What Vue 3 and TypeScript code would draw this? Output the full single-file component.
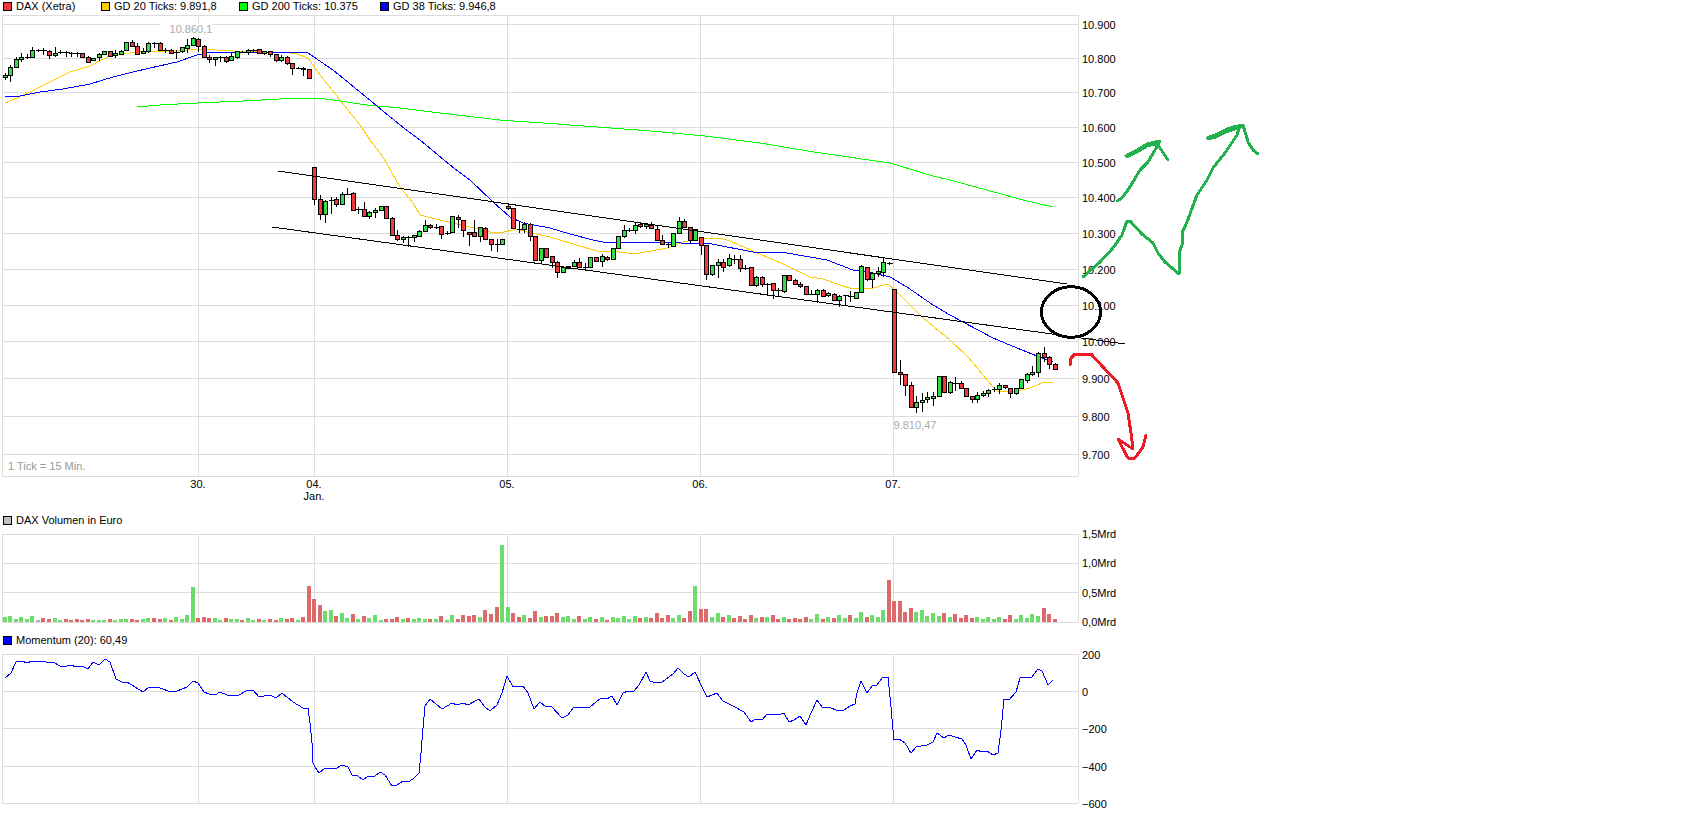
<template>
  <div class="page">
    <div class="legend">
      <div v-for="item in priceLegend" :key="item.label" class="legend-item" :class="item.size">
        <span class="swatch" :style="{ background: item.color }"></span>
        <span>{{ item.label }}</span>
      </div>
    </div>

    <svg class="panel" width="1701" height="502" viewBox="0 12 1701 502">
      <g class="grid">
        <line v-for="y in priceGrid" :key="y" x1="2" x2="1078" :y1="y" :y2="y" />
        <line x1="2" x2="1078" y1="15" y2="15" />
        <line x1="2" x2="1078" y1="476" y2="476" />
        <line v-for="x in dayLines" :key="x" :x1="x" :x2="x" y1="15" y2="476" />
        <line x1="2" x2="2" y1="15" y2="476" />
        <line x1="1078" x2="1078" y1="15" y2="476" />
      </g>

      <rect x="160" y="23" width="52" height="11" fill="#fff" />
      <text class="note middle" x="191" y="33">10.860,1</text>
      <text class="note middle" x="915" y="429">9.810,47</text>
      <text class="tick-note" x="8" y="470">1 Tick = 15 Min.</text>

      <polyline class="line" stroke="#00ff00" :points="gd200" />
      <polyline class="line" stroke="#ffcc00" :points="gd20" />
      <polyline class="line" stroke="#0000ff" :points="gd38" />

      <g v-for="c in candles" :key="c.x">
        <line class="wick" :x1="c.x" :x2="c.x" :y1="c.wickTop" :y2="c.wickBottom" />
        <line v-if="c.kind === 'd'" class="doji" :x1="c.x - 2.5" :x2="c.x + 3" :y1="c.top" :y2="c.top" />
        <rect v-else class="body" :class="c.kind" :x="c.x - 2" :y="c.top" width="4" :height="c.height" />
      </g>

      <line class="channel" x1="278" y1="171" x2="1067" y2="284" />
      <line class="channel" x1="272" y1="227" x2="1125" y2="344" />

      <text v-for="l in priceLabels" :key="l.text" class="label" x="1082" :y="l.y + 4">{{ l.text }}</text>
      <text v-for="d in dayLabels" :key="d.text" class="label middle" :x="d.x" y="488">{{ d.text }}</text>
      <text class="label middle" x="314" y="500">Jan.</text>

      <ellipse class="pen black" cx="1071" cy="312" rx="29.5" ry="25.3" />
      <polyline class="pen green" :points="penLeftLow" />
      <polyline class="pen green" :points="penLeftHigh" />
      <polyline class="pen green" :points="penLeftHead" />
      <polyline class="pen green" :points="penRight" />
      <polyline class="pen green" :points="penRightHead" />
      <polyline class="pen red" :points="penRed" />
    </svg>

    <div class="legend">
      <div class="legend-item">
        <span class="swatch" style="background: #c0c0c0"></span>
        <span>DAX Volumen in Euro</span>
      </div>
    </div>

    <svg class="panel" width="1701" height="108" viewBox="0 526 1701 108">
      <g class="grid">
        <line v-for="y in [534, 563, 592, 622]" :key="y" x1="2" x2="1078" :y1="y" :y2="y" />
        <line v-for="x in dayLines" :key="x" :x1="x" :x2="x" y1="534" y2="622" />
        <line x1="2" x2="2" y1="534" y2="622" />
        <line x1="1078" x2="1078" y1="534" y2="622" />
      </g>
      <rect v-for="b in bars" :key="b.x" :x="b.x" :y="622 - b.h" width="4" :height="b.h" :fill="b.color" />
      <text v-for="l in volumeLabels" :key="l.text" class="label" x="1082" :y="l.y + 4">{{ l.text }}</text>
    </svg>

    <div class="legend">
      <div class="legend-item">
        <span class="swatch" style="background: #0000ff"></span>
        <span>Momentum (20): 60,49</span>
      </div>
    </div>

    <svg class="panel" width="1701" height="169" viewBox="0 646 1701 169">
      <g class="grid">
        <line v-for="y in [654, 691, 728, 766, 803]" :key="y" x1="2" x2="1078" :y1="y" :y2="y" />
        <line v-for="x in dayLines" :key="x" :x1="x" :x2="x" y1="654" y2="803" />
        <line x1="2" x2="2" y1="654" y2="803" />
        <line x1="1078" x2="1078" y1="654" y2="803" />
      </g>
      <polyline class="line" stroke="#0000ff" :points="momentum" />
      <text v-for="l in momentumLabels" :key="l.text" class="label" x="1082" :y="l.y + 4">{{ l.text }}</text>
    </svg>
  </div>
</template>

<script setup lang="ts">
type Kind = 'r' | 'g' | 'd'

const tickX = (i: number) => 4.8 + 5.525 * i

const priceLegend = [
  { label: 'DAX (Xetra)', color: '#ee3a3a', size: 'w98' },
  { label: 'GD 20 Ticks: 9.891,8', color: '#ffcc00', size: 'w138' },
  { label: 'GD 200 Ticks: 10.375', color: '#00ff00', size: 'w141' },
  { label: 'GD 38 Ticks: 9.946,8', color: '#0000ff', size: 'w141' },
]

const priceGrid = [24, 58, 92, 127, 162, 197, 233, 269, 305, 341, 378, 416, 454]
const dayLines = [198, 314, 507, 700, 893]
const priceNames = ['10.900', '10.800', '10.700', '10.600', '10.500', '10.400', '10.300', '10.200', '10.100', '10.000', '9.900', '9.800', '9.700']
const priceLabels = priceNames.map((text, i) => ({ text, y: priceGrid[i] + 1 }))
const dayLabels = [
  { text: '30.', x: 198 },
  { text: '04.', x: 314 },
  { text: '05.', x: 507 },
  { text: '06.', x: 700 },
  { text: '07.', x: 893 },
]
const volumeLabels = [
  { text: '1,5Mrd', y: 534 },
  { text: '1,0Mrd', y: 563 },
  { text: '0,5Mrd', y: 593 },
  { text: '0,0Mrd', y: 622 },
]
const momentumLabels = [
  { text: '200', y: 655 },
  { text: '0', y: 692 },
  { text: '−200', y: 729 },
  { text: '−400', y: 767 },
  { text: '−600', y: 804 },
]

// body top, body bottom, wick top, wick bottom, kind
const rawCandles: [number, number, number, number, Kind][] = [
  [75, 77, 73, 80, 'g'], [67, 75, 65, 82, 'g'], [59, 67, 57, 68, 'g'], [57, 59, 53, 62, 'g'], [57, 57, 54, 59, 'd'],
  [50, 57, 47, 58, 'g'], [50, 50, 49, 52, 'd'], [50, 50, 48, 55, 'd'], [51, 55, 50, 59, 'r'], [53, 55, 47, 57, 'g'],
  [52, 52, 50, 54, 'd'], [52, 52, 51, 57, 'd'], [53, 53, 52, 57, 'd'], [53, 53, 52, 57, 'd'], [53, 57, 53, 57, 'r'],
  [57, 62, 56, 63, 'r'], [58, 60, 58, 61, 'g'], [54, 57, 53, 61, 'g'], [51, 54, 51, 55, 'g'], [51, 56, 51, 56, 'r'],
  [53, 55, 50, 58, 'g'], [51, 54, 50, 55, 'g'], [42, 50, 42, 51, 'g'], [42, 46, 40, 47, 'r'], [46, 54, 43, 54, 'r'],
  [51, 53, 48, 53, 'g'], [43, 51, 42, 53, 'g'], [43, 43, 42, 48, 'd'], [43, 50, 42, 51, 'r'], [50, 50, 48, 53, 'd'],
  [50, 53, 49, 54, 'r'], [52, 52, 50, 59, 'd'], [47, 51, 47, 53, 'g'], [45, 48, 39, 53, 'g'], [38, 45, 37, 46, 'g'],
  [39, 46, 38, 52, 'r'], [46, 57, 45, 58, 'r'], [57, 59, 55, 63, 'r'], [57, 59, 57, 66, 'g'], [57, 57, 56, 62, 'd'],
  [57, 61, 56, 63, 'r'], [56, 60, 52, 61, 'g'], [51, 57, 51, 59, 'g'], [52, 52, 51, 53, 'd'], [50, 52, 49, 55, 'g'],
  [50, 50, 49, 52, 'd'], [49, 53, 49, 54, 'r'], [51, 53, 51, 55, 'g'], [51, 54, 51, 57, 'r'], [54, 60, 54, 62, 'r'],
  [57, 60, 55, 62, 'g'], [57, 63, 56, 65, 'r'], [63, 68, 63, 75, 'r'], [68, 68, 67, 69, 'd'], [68, 69, 67, 76, 'r'],
  [69, 78, 69, 78, 'r'],
  [167, 199, 167, 205, 'r'], [199, 214, 195, 220, 'r'], [201, 214, 200, 223, 'g'], [200, 200, 197, 214, 'd'], [199, 204, 197, 207, 'r'],
  [194, 204, 192, 205, 'g'], [194, 194, 188, 195, 'd'], [193, 210, 192, 210, 'r'], [209, 209, 207, 214, 'd'], [209, 216, 202, 217, 'r'],
  [212, 216, 211, 219, 'g'], [210, 212, 208, 218, 'g'], [206, 210, 206, 211, 'g'], [206, 218, 206, 219, 'r'], [218, 235, 217, 235, 'r'],
  [235, 239, 230, 241, 'r'], [237, 239, 236, 243, 'g'], [237, 237, 236, 247, 'd'], [235, 237, 235, 242, 'g'], [231, 236, 230, 237, 'g'],
  [225, 231, 220, 232, 'g'], [225, 227, 224, 229, 'r'], [227, 227, 224, 229, 'd'], [226, 234, 226, 239, 'r'], [233, 233, 231, 235, 'd'],
  [216, 232, 216, 233, 'g'], [217, 219, 215, 228, 'r'], [220, 230, 220, 237, 'r'], [232, 234, 232, 246, 'r'], [232, 236, 220, 237, 'r'],
  [227, 236, 227, 242, 'g'], [228, 239, 227, 239, 'r'], [239, 244, 239, 251, 'r'], [244, 244, 239, 252, 'd'], [239, 244, 239, 244, 'g'],
  [206, 208, 203, 210, 'r'], [208, 228, 208, 229, 'r'], [229, 229, 221, 233, 'd'], [224, 229, 222, 233, 'g'], [224, 236, 223, 241, 'r'],
  [236, 260, 236, 260, 'r'], [248, 260, 248, 264, 'g'], [248, 257, 248, 258, 'r'], [256, 262, 256, 268, 'r'], [262, 272, 261, 278, 'r'],
  [267, 272, 267, 272, 'g'], [266, 268, 266, 269, 'g'], [262, 266, 260, 267, 'g'], [262, 267, 258, 267, 'r'], [267, 267, 263, 269, 'd'],
  [257, 267, 257, 267, 'g'], [257, 261, 257, 262, 'r'], [256, 261, 254, 267, 'g'], [257, 259, 256, 261, 'r'], [248, 259, 248, 260, 'g'],
  [236, 248, 236, 249, 'g'], [230, 236, 225, 238, 'g'], [230, 230, 228, 232, 'd'], [225, 230, 223, 234, 'g'], [224, 226, 223, 228, 'r'],
  [224, 226, 223, 229, 'g'], [225, 228, 222, 229, 'r'], [229, 240, 225, 240, 'r'], [240, 244, 235, 245, 'r'], [244, 244, 243, 248, 'd'],
  [233, 246, 233, 247, 'g'], [221, 233, 217, 234, 'g'], [221, 227, 219, 228, 'r'], [227, 240, 227, 243, 'r'], [229, 240, 229, 241, 'g'],
  [237, 245, 237, 255, 'r'], [245, 274, 245, 280, 'r'], [265, 274, 265, 276, 'g'], [262, 265, 259, 278, 'g'], [262, 267, 259, 272, 'r'],
  [258, 265, 254, 267, 'g'], [259, 259, 255, 264, 'd'], [259, 268, 255, 272, 'r'], [268, 268, 265, 270, 'd'], [267, 285, 267, 286, 'r'],
  [277, 285, 276, 287, 'g'], [277, 284, 276, 287, 'r'], [284, 284, 283, 296, 'd'], [283, 290, 283, 299, 'r'], [290, 290, 288, 297, 'd'],
  [275, 291, 275, 293, 'g'], [275, 280, 275, 281, 'r'], [280, 284, 279, 285, 'r'], [284, 286, 282, 288, 'r'], [286, 294, 286, 295, 'r'],
  [294, 294, 290, 295, 'd'], [290, 294, 289, 303, 'g'], [290, 296, 289, 297, 'r'], [293, 295, 292, 297, 'g'], [294, 300, 293, 301, 'r'],
  [296, 300, 295, 307, 'g'], [295, 295, 295, 306, 'd'], [296, 296, 291, 302, 'd'], [292, 298, 292, 299, 'g'], [266, 292, 265, 293, 'g'],
  [267, 279, 267, 281, 'r'], [273, 279, 272, 288, 'g'], [271, 273, 267, 277, 'g'], [262, 272, 258, 277, 'g'], [263, 263, 262, 265, 'd'],
  [289, 372, 289, 373, 'r'], [372, 374, 360, 385, 'r'], [374, 385, 374, 396, 'r'], [385, 407, 382, 408, 'r'], [402, 407, 396, 413, 'g'],
  [400, 402, 393, 412, 'g'], [397, 399, 392, 403, 'g'], [396, 398, 392, 406, 'g'], [376, 396, 376, 397, 'g'], [376, 392, 376, 393, 'r'],
  [382, 392, 381, 394, 'g'], [383, 383, 377, 391, 'd'], [383, 388, 381, 389, 'r'], [388, 396, 388, 397, 'r'], [396, 399, 396, 403, 'r'],
  [395, 399, 392, 403, 'g'], [393, 395, 391, 397, 'g'], [390, 393, 389, 397, 'g'], [389, 389, 387, 392, 'd'], [385, 389, 383, 394, 'g'],
  [385, 387, 385, 389, 'r'], [388, 393, 388, 398, 'r'], [388, 393, 388, 395, 'g'], [379, 388, 379, 389, 'g'], [374, 380, 373, 383, 'g'],
  [372, 374, 366, 376, 'g'], [353, 372, 352, 377, 'g'], [353, 357, 347, 362, 'r'], [357, 364, 356, 369, 'r'], [364, 369, 363, 369, 'r'],
]

const candles = rawCandles.map(([top, bottom, wickTop, wickBottom, kind], i) => {
  const x = Math.round(tickX(i)) + 0.5
  return {
    x,
    top: top + 0.5,
    height: Math.max(bottom - top, 1),
    wickTop,
    wickBottom,
    kind,
  }
})

// height of the volume bar per tick, negative is a red bar
const rawVolumes = [
  5, 6, 3, 5, 3, 6, 2, -4, -3, 4, 2, -3, -2, -3, -2, -3, 2, 2, 2, -3, 2, 3, 3, -3, -2, 3, 4, -4, -3, 4,
  -2, 5, 3, 7, 35, -4, -5, -4, 4, 2, -4, 3, 3, -2, 4, 2, -3, 2, -3, -2, 4, -3, -4, 2, -5, -36, -23, -17, 11, 12,
  -6, 9, 4, -8, 3, -6, 4, 7, 2, -3, -3, -5, 3, -4, 3, 4, 3, -3, 3, -6, 2, 7, -3, -7, -6, -7, 5, -12, -8, -15,
  77, 15, -9, -5, 7, -4, -11, 5, -6, -6, -9, 5, 6, 3, -6, 3, 5, -3, 5, -2, 5, 4, 6, 3, 6, -4, 5, -4, -9, -4,
  -7, 4, 7, -4, -11, 36, -13, -13, 5, 9, -5, 7, -4, -6, -3, -7, 4, -5, 5, -7, -3, 5, -3, -4, -3, -5, 3, 8, -3, 5,
  -4, 7, 4, -7, 4, 10, -5, 7, 5, 12, -42, -21, -21, -10, -14, 10, 12, 6, 9, 6, -9, 5, -8, -4, -7, -4, 5, 3, 5, 3,
  5, -3, -7, 3, 7, 4, 8, 6, -14, -8, -3,
]

const bars = rawVolumes.map((v, i) => ({
  x: Math.round(tickX(i)) - 2,
  h: Math.abs(v),
  color: i === 6 ? '#b4b4b4' : v < 0 ? '#dc6a6a' : '#6cdc6c',
}))

const gd20 = '5,103 10,101 30,92 50,82 70,72 90,66 107,57 120,54 140,52 167,51 187,50 200,49 233,51 257,52 283,52 297,54 308,58 320,75 340,100 360,125 370,140 383,157 400,187 413,203 420,215 440,220 453,223 470,227 490,232 500,233 517,229 527,232 550,237 583,247 597,251 612,251 627,253 640,253 667,248 683,242 697,239 720,238 730,241 753,251 783,264 810,277 823,279 840,285 853,289 873,288 888,284 897,292 923,318 950,340 968,357 993,387 998,392 1017,391 1030,388 1042,383 1053,382'
const gd38 = '5,97 20,96 40,92 63,89 90,84 113,77 133,72 150,68 177,62 197,55 207,53 210,52 233,52 283,52 308,53 333,70 360,92 400,125 420,140 450,165 470,180 493,202 510,217 523,223 550,228 570,234 593,240 603,242 650,242 712,244 753,252 787,253 827,260 853,270 873,273 890,277 907,287 933,305 950,315 963,322 993,338 1017,348 1037,356 1053,362'
const gd200 = '137,107 160,105 197,103 243,101 297,98 317,98 333,100 367,105 400,108 440,113 500,120 543,123 651,131 705,136 760,143 814,152 890,163 933,176 950,180 983,189 1023,200 1053,207'
const momentum = '5,678 11,673 16,662 22,661 27,663 32,661 43,661 49,663 53,662 60,666 67,666 71,665 76,667 82,666 88,669 93,662 99,665 105,659 110,662 116,679 122,682 127,682 143,692 149,687 160,688 171,692 177,691 187,687 193,681 198,683 204,692 209,694 215,695 220,692 227,695 232,695 237,696 248,690 253,690 259,697 270,695 276,698 282,693 293,702 303,708 308,708 310,723 312,743 313,763 315,767 319,773 325,768 335,769 342,765 348,767 352,775 358,776 363,780 368,776 375,776 380,772 385,775 392,786 397,785 403,781 408,782 413,779 419,773 421,753 423,728 425,706 430,699 442,709 452,703 457,705 463,703 468,705 479,699 485,707 490,711 497,705 502,693 507,676 513,687 523,686 528,693 534,709 540,702 546,707 551,706 562,718 568,715 573,708 590,707 601,698 607,699 612,696 617,705 623,693 628,691 634,691 639,685 646,672 650,681 653,682 662,682 673,674 678,668 684,674 689,677 695,672 702,687 707,697 717,693 723,701 733,706 744,712 751,722 756,719 762,720 767,714 778,715 784,713 789,722 794,720 800,716 806,725 811,713 817,700 822,707 828,707 839,711 844,710 850,706 855,704 857,693 861,681 867,693 872,686 877,685 883,677 888,677 891,707 893,730 893,740 899,739 905,743 911,753 916,747 927,745 933,742 937,733 944,738 949,735 955,737 962,739 966,745 971,759 977,750 982,752 987,751 993,755 998,753 1001,730 1004,699 1009,700 1016,692 1020,678 1032,677 1038,669 1042,671 1048,685 1053,680'

const penLeftLow = '1083,277 1100,262 1113,248 1122,235 1127,221 1130,221 1142,234 1153,243 1158,253 1165,262 1179,274 1179,253 1182,245 1182,233 1187,222 1197,195 1207,180 1213,168 1225,153 1237,135 1239,128'
const penLeftHigh = '1117,201 1122,198 1130,187 1140,170 1148,162 1158,145 1160,141 1147,144 1137,150 1126,156 1137,150 1147,144 1158,145 1168,160'
const penLeftHead = '1127,157 1137,152 1147,146 1158,143'
const penRight = '1207,138 1215,135 1225,130 1233,127 1243,125 1233,129 1239,128 1243,125 1248,142 1253,150 1258,154'
const penRightHead = '1208,139 1216,137 1226,132 1238,128'
const penRed = '1070,365 1071,358 1075,354 1091,354 1103,367 1118,383 1123,398 1128,413 1131,433 1133,449 1118,439 1122,447 1128,458 1135,458 1143,447 1146,435'
</script>

<style scoped>
.page {
  width: 1701px;
  height: 815px;
  display: flex;
  flex-direction: column;
  overflow: hidden;
  background: #fff;
  font-family: "Liberation Sans", Arial, sans-serif;
  font-size: 11px;
  color: #000;
}

.legend {
  height: 12px;
  flex: none;
  display: flex;
  align-items: center;
  padding-left: 3px;
}

.legend-item {
  display: flex;
  align-items: center;
  gap: 4px;
  white-space: nowrap;
}

.w98 { width: 98px; }
.w138 { width: 138px; }
.w141 { width: 141px; }

.swatch {
  width: 7px;
  height: 7px;
  border: 1px solid #000;
  flex: none;
}

.panel {
  display: block;
  flex: none;
}

.grid line {
  stroke: #dcdcdc;
  stroke-width: 1;
  shape-rendering: crispEdges;
}

.line {
  fill: none;
  stroke-width: 1;
  shape-rendering: crispEdges;
}

.wick {
  stroke: #000;
  stroke-width: 1;
  shape-rendering: crispEdges;
}

.doji {
  stroke: #000;
  stroke-width: 1.5;
  shape-rendering: crispEdges;
}

.body {
  stroke: #000;
  stroke-width: 1;
  shape-rendering: crispEdges;
}

.body.r { fill: #ee3a3a; }
.body.g { fill: #33dd44; }

.channel {
  stroke: #000;
  stroke-width: 1;
  shape-rendering: crispEdges;
}

.label {
  font-size: 11px;
  fill: #000;
}

.middle {
  text-anchor: middle;
}

.note {
  font-size: 11px;
  fill: #aaa;
}

.tick-note {
  font-size: 11px;
  fill: #999;
}

.pen {
  fill: none;
  stroke-width: 3;
  stroke-linejoin: round;
  stroke-linecap: round;
  shape-rendering: crispEdges;
}

.pen.black { stroke: #000; }
.pen.green { stroke: #22b14c; }
.pen.red { stroke: #ed1c24; }
</style>

<style>
html, body {
  margin: 0;
  background: #fff;
}
</style>
